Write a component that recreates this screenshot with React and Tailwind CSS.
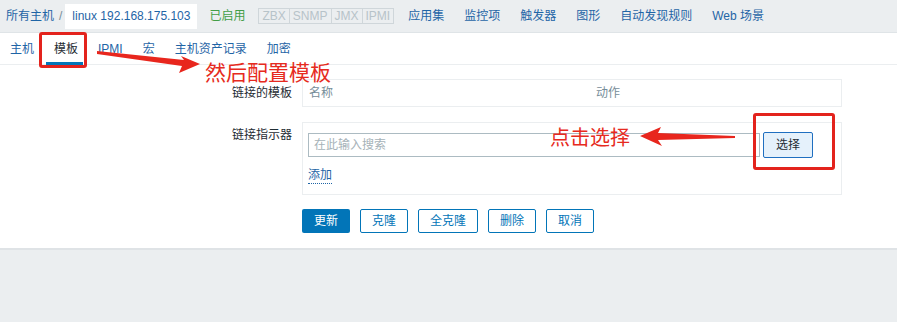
import React from "react";

const font = "font-['Liberation_Sans','Noto_Sans_CJK_SC',sans-serif]";
const cjk = "font-['Noto_Sans_CJK_SC','Liberation_Sans',sans-serif]";

const headerLinks = ["应用集", "监控项", "触发器", "图形", "自动发现规则", "Web 场景"];
const tabs = ["主机", "模板", "IPMI", "宏", "主机资产记录", "加密"];
const actions = ["克隆", "全克隆", "删除", "取消"];

const Header = () => (
  <div className="flex h-[33px] items-center border-b border-[#dfe4e7] bg-[#ebeef0] pl-[6px] text-[12px]">
    <span className="text-[#1f65a6]">所有主机</span>
    <span className="ml-[5px] text-[#768d99]">/</span>
    <span className="ml-[3px] flex h-[25px] items-center bg-white px-[7px] text-[#1f65a6]">
      linux 192.168.175.103
    </span>
    <span className="ml-[12px] text-[#429e47]">已启用</span>
    <div className="ml-[13px] flex h-[16px] border border-[#cfd6da] text-[12px] leading-[14px] text-[#b7c3c9]">
      <span className="px-[3px]">ZBX</span>
      <span className="border-l border-[#cfd6da] px-[3px]">SNMP</span>
      <span className="border-l border-[#cfd6da] px-[3px]">JMX</span>
      <span className="border-l border-[#cfd6da] px-[3px]">IPMI</span>
    </div>
    <div className="ml-[4px] flex">
      {headerLinks.map((l) => (
        <span key={l} className="px-[10px] text-[#1f65a6]">
          {l}
        </span>
      ))}
    </div>
  </div>
);

const Tabs = () => (
  <div className="flex h-[32px] border-b border-[#ebeef0] text-[12px]">
    {tabs.map((t) => (
      <div key={t} className="relative flex items-center px-[10px]">
        <span className={t === "模板" ? "text-[#1f2c33]" : "text-[#1f65a6]"}>{t}</span>
        {t === "模板" && (
          <span className="absolute bottom-[-1px] left-[2px] right-[5px] h-[3px] bg-[#0275b8]" />
        )}
      </div>
    ))}
  </div>
);

const Form = () => (
  <div className="border-b-[2px] border-[#dfe3e6] bg-white pb-[15px] pt-[14px] text-[12px]">
    <div className="flex items-center">
      <div className="w-[292px] text-right text-[#1f2c33]">链接的模板</div>
      <div className="ml-[10px] flex h-[28px] w-[540px] items-center border border-[#ebeef0] px-[6px] text-[#768d99]">
        <span className="w-[287px]">名称</span>
        <span>动作</span>
      </div>
    </div>
    <div className="mt-[15px] flex items-start">
      <div className="w-[292px] pt-[4px] text-right text-[#1f2c33]">链接指示器</div>
      <div className="ml-[10px] h-[73px] w-[540px] border border-[#ebeef0] px-[5px] pt-[9px]">
        <div className="flex items-center">
          <div className="flex h-[24px] w-[452px] items-center border border-[#acbbc2] px-[5px] text-[#a6b2b8]">
            在此输入搜索
          </div>
          <button className="ml-[3px] h-[26px] w-[50px] rounded-[2px] border border-[#1f6fc0] bg-[#e5f1fb] text-[12px] text-[#1f2c33]">
            选择
          </button>
        </div>
        <span className="mt-[10px] inline-block border-b border-dotted border-[#1f65a6] leading-[15px] text-[#1f65a6]">
          添加
        </span>
      </div>
    </div>
    <div className="ml-[302px] mt-[14px] flex gap-[10px]">
      <button className="h-[24px] rounded-[2px] bg-[#0275b8] px-[12px] text-white">更新</button>
      {actions.map((a) => (
        <button
          key={a}
          className="h-[24px] rounded-[2px] border border-[#0275b8] bg-white px-[11px] text-[#0275b8]"
        >
          {a}
        </button>
      ))}
    </div>
  </div>
);

const Annotations = () => (
  <>
    <div className="absolute left-[39px] top-[32px] h-[36px] w-[48px] rounded-[3px] border-[3px] border-[#e3231d]" />
    <div className="absolute left-[753px] top-[113px] h-[57px] w-[82px] rounded-[3px] border-[3px] border-[#e3231d]" />
    <svg className="absolute left-0 top-0" width="897" height="322" viewBox="0 0 897 322">
      <polygon
        points="97,51 184,60 181,56 200,64 179,73 182,66 97,54"
        fill="#e8261d"
      />
      <polygon
        points="640,136 661,127 658,133 735,136 735,138 658,140 662,146"
        fill="#e8261d"
      />
    </svg>
    <span className={`absolute left-[205px] top-[57px] text-[21px] leading-[28px] text-[#e62a20] ${cjk}`}>
      然后配置模板
    </span>
    <span className={`absolute left-[550px] top-[123px] text-[20px] leading-[28px] text-[#e62a20] ${cjk}`}>
      点击选择
    </span>
  </>
);

export default function App() {
  return (
    <div className={`relative h-[322px] w-[897px] overflow-hidden bg-[#ebeef0] ${font}`}>
      <Header />
      <div className="bg-white">
        <Tabs />
        <Form />
      </div>
      <Annotations />
    </div>
  );
}
